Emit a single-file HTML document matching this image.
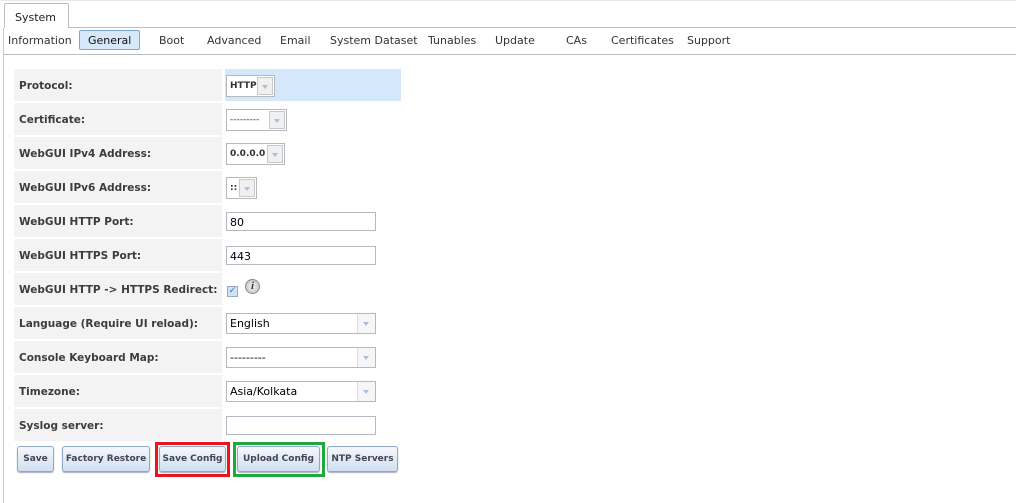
<!DOCTYPE html>
<html><head><meta charset="utf-8"><style>
*{box-sizing:border-box;margin:0;padding:0}
body{width:1016px;height:503px;background:#fff;position:relative;overflow:hidden;font-family:"DejaVu Sans","Liberation Sans",sans-serif;color:#333}
.a{position:absolute}
.nav{font-size:11px;top:34px;color:#333;white-space:nowrap}
.lab{left:14px;width:208px;height:32px;background:#f3f3f3;font-weight:bold;font-size:10.5px;padding-left:5px;line-height:34px;color:#3c3c3c}
.val{left:225px;width:176px;height:32px}
.sel{position:absolute;left:1px;top:6px;height:22px;border:1px solid #b4b8c0;background:#fff;font-size:9px;font-weight:bold;line-height:21px;padding-left:3px;color:#333}
.sel .ar{position:absolute;right:1px;top:1px;width:16px;height:18px;border:1px solid #c8c8c8;background:#f0f0f0}
.sel .ar:after{content:"";position:absolute;left:4px;top:7px;border-left:3.5px solid transparent;border-right:3.5px solid transparent;border-top:4px solid #a8c0e0}
.inp{position:absolute;left:1px;top:7px;width:150px;height:19px;border:1px solid #b4b8c0;background:#fff;font-size:11px;line-height:19px;padding-left:3px;color:#000}
.bsel{position:absolute;left:1px;top:6px;width:150px;height:21px;border:1px solid #b4b8c0;background:#fff;font-size:11px;line-height:20px;padding-left:3px;color:#000}
.bsel .ar{position:absolute;right:0;top:0;width:18px;height:19px;border-left:1px solid #ddd;background:#f6f6f6}
.bsel .ar:after{content:"";position:absolute;left:5px;top:8px;border-left:3.5px solid transparent;border-right:3.5px solid transparent;border-top:4px solid #a8c0e0}
.btn{top:446px;height:26px;border:1px solid #8fa9c9;border-radius:3px;background:linear-gradient(#f4f8fc,#cfe0f1);font-size:9px;font-weight:bold;color:#445;line-height:25px;text-align:center;box-shadow:0 1px 1px #aab}
</style></head><body>
<div class="a" style="left:0;top:0;width:1016px;height:1px;background:#e8e8e8"></div>
<div class="a" style="left:4px;top:3px;width:65px;height:25px;border:1px solid #b8bec6;border-bottom:none;border-radius:2px 2px 0 0;background:#fff;font-size:11px;line-height:27px;padding-left:10px;color:#222">System</div>
<div class="a" style="left:68px;top:27px;width:948px;height:1px;background:#b8bec6"></div>
<div class="a" style="left:3px;top:28px;width:1px;height:475px;background:#c8cdd4"></div>
<div class="a" style="left:3px;top:54px;width:1013px;height:1px;background:#b8bec6"></div>
<div class="a nav" style="left:8px">Information</div>
<div class="a" style="left:79px;top:30px;width:61px;height:20px;border:1px solid #7fa6cf;border-radius:2px;background:#d6e8fa"></div>
<div class="a nav" style="left:88px;color:#111">General</div>
<div class="a nav" style="left:159px">Boot</div>
<div class="a nav" style="left:207px">Advanced</div>
<div class="a nav" style="left:280px">Email</div>
<div class="a nav" style="left:330px">System Dataset</div>
<div class="a nav" style="left:428px">Tunables</div>
<div class="a nav" style="left:495px">Update</div>
<div class="a nav" style="left:566px">CAs</div>
<div class="a nav" style="left:611px">Certificates</div>
<div class="a nav" style="left:687px">Support</div>

<div class="a lab" style="top:69px">Protocol:</div>
<div class="a val" style="top:69px;background:#d5e8fb"><div class="sel" style="width:49px">HTTP<span class="ar"></span></div></div>
<div class="a lab" style="top:103px">Certificate:</div>
<div class="a val" style="top:103px"><div class="sel" style="width:61px;font-weight:normal">---------<span class="ar"></span></div></div>
<div class="a lab" style="top:137px">WebGUI IPv4 Address:</div>
<div class="a val" style="top:137px"><div class="sel" style="width:59px">0.0.0.0<span class="ar"></span></div></div>
<div class="a lab" style="top:171px">WebGUI IPv6 Address:</div>
<div class="a val" style="top:171px"><div class="sel" style="width:31px">::<span class="ar"></span></div></div>
<div class="a lab" style="top:205px">WebGUI HTTP Port:</div>
<div class="a val" style="top:205px"><div class="inp">80</div></div>
<div class="a lab" style="top:239px">WebGUI HTTPS Port:</div>
<div class="a val" style="top:239px"><div class="inp">443</div></div>
<div class="a lab" style="top:273px">WebGUI HTTP -&gt; HTTPS Redirect:</div>
<div class="a val" style="top:273px">
<div class="a" style="left:2px;top:13px;width:11px;height:11px;border:1px solid #9ab;background:#cfe2f6;color:#3a78c2;font-size:9px;line-height:9px;text-align:center">✓</div>
<div class="a" style="left:20px;top:6px;width:15px;height:15px;border-radius:50%;background:radial-gradient(#f4f4f4,#bbb);border:1px solid #888;font:italic bold 11px 'Liberation Serif',serif;text-align:center;line-height:13px;color:#333">i</div>
</div>
<div class="a lab" style="top:307px">Language (Require UI reload):</div>
<div class="a val" style="top:307px"><div class="bsel">English<span class="ar"></span></div></div>
<div class="a lab" style="top:341px">Console Keyboard Map:</div>
<div class="a val" style="top:341px"><div class="bsel">---------<span class="ar"></span></div></div>
<div class="a lab" style="top:375px">Timezone:</div>
<div class="a val" style="top:375px"><div class="bsel">Asia/Kolkata<span class="ar"></span></div></div>
<div class="a lab" style="top:409px">Syslog server:</div>
<div class="a val" style="top:409px"><div class="inp"></div></div>

<div class="a btn" style="left:17px;width:37px">Save</div>
<div class="a btn" style="left:62px;width:88px">Factory Restore</div>
<div class="a" style="left:155px;top:442px;width:75px;height:35px;border:3px solid #e8141e"></div>
<div class="a btn" style="left:159px;width:67px">Save Config</div>
<div class="a" style="left:233px;top:442px;width:92px;height:35px;border:3px solid #1fa83c"></div>
<div class="a btn" style="left:237px;width:83px">Upload Config</div>
<div class="a btn" style="left:327px;width:71px">NTP Servers</div>
</body></html>
